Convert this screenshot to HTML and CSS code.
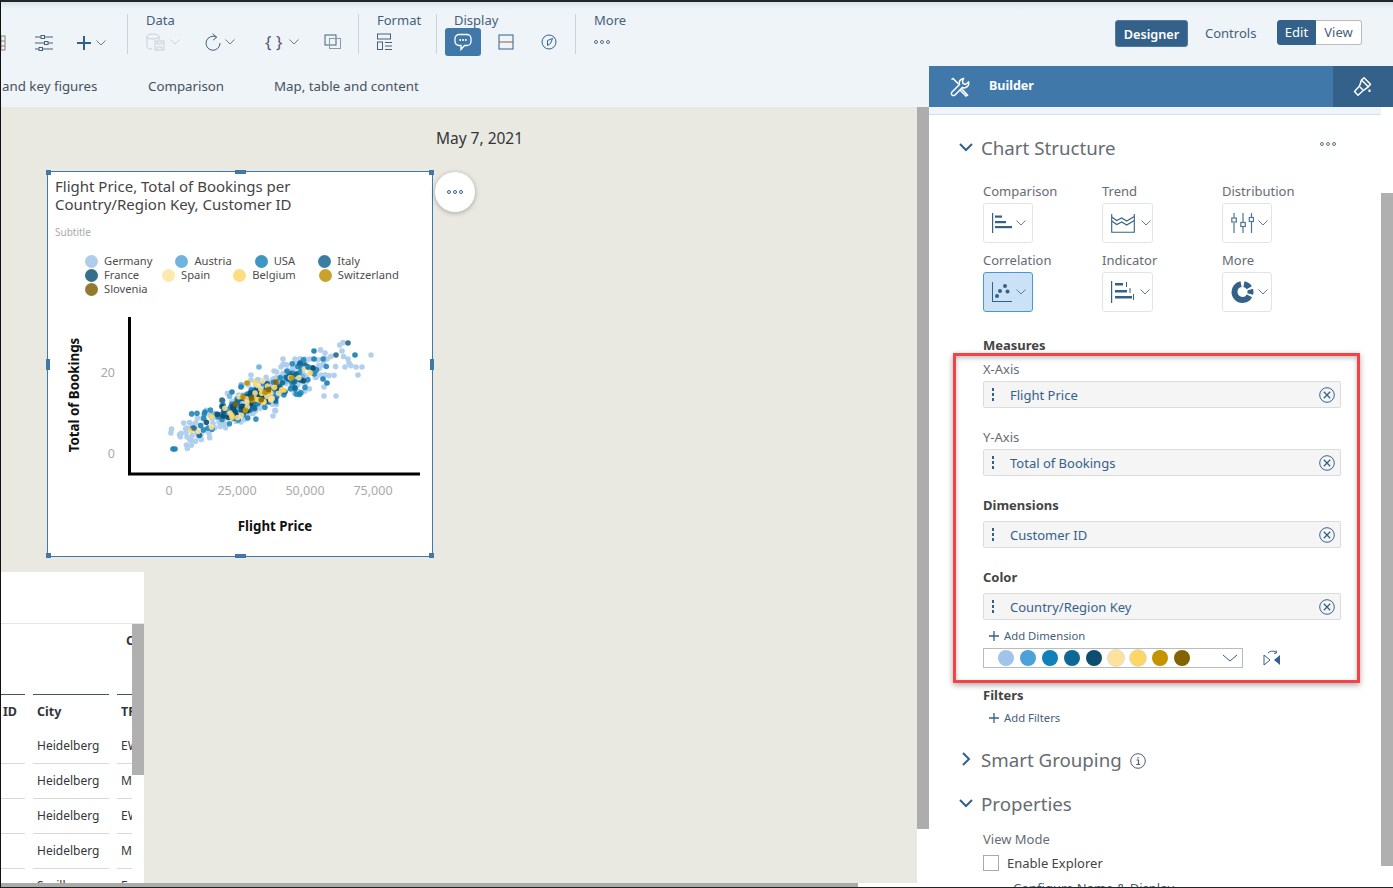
FILE: index.html
```html
<!DOCTYPE html>
<html lang="en">

<head>
    <meta charset="UTF-8" />
    <title>Chart Builder</title>
    <link rel="stylesheet" href="styles.css">
</head>

<body>
    <div class="app">
        <header class="toolbar">
            <div class="tb_group tb_first">
                <div class="tb_icons">
                    <span class="tb_icon cut_icon">
                        <svg width="18" height="18" viewBox="0 0 18 18" fill="none" stroke="#8a7f75"><rect x="2" y="2" width="14" height="14"/><path d="M2 7h14M2 12h14M7 2v14M12 2v14"/></svg>
                    </span>
                    <span class="tb_icon sliders_icon">
                        <svg width="20" height="20" viewBox="0 0 20 20" fill="none" stroke="#46607a"><path d="M1 4h6M11 4h8M1 10h9M14 10h5M1 16h4M9 16h10"/><rect x="7" y="2.500" width="3.500" height="3"/><rect x="10.500" y="8.500" width="3.500" height="3"/><rect x="5" y="14.500" width="3.500" height="3"/></svg>
                    </span>
                    <span class="tb_icon plus_icon">
                        <svg width="16" height="16" viewBox="0 0 16 16" fill="none" stroke="#34618a" stroke-width="2"><path d="M8 1v14M1 8h14"/></svg>
                        <svg class="chev" width="10" height="6" viewBox="0 0 10 6" fill="none" stroke="#5f7d9a"><path d="M.5.5 5 5 9.500.5"/></svg>
                    </span>
                </div>
            </div>

            <div class="tb_group tb_data">
                <div class="tb_label">Data</div>
                <div class="tb_icons">
                    <span class="tb_icon">
                        <svg width="20" height="18" viewBox="0 0 20 18" fill="none" stroke="#c9d0d6"><ellipse cx="7" cy="3.500" rx="6" ry="2.500"/><path d="M1 3.500v10c0 1.500 2 2.500 5 2.500M13 3.500V7"/><rect x="9" y="8" width="9" height="9"/><path d="M11 8v3h5V8M11 17v-3h5v3"/></svg>
                        <svg class="chev" width="10" height="6" viewBox="0 0 10 6" fill="none" stroke="#c9d0d6"><path d="M.5.5 5 5 9.500.5"/></svg>
                    </span>
                    <span class="tb_icon">
                        <svg width="16" height="18" viewBox="0 0 16 18" fill="none" stroke="#46607a"><path d="M11.500 4.200A7 7 0 1 0 15 10"/><path d="M7.500 .8l4.200 3.400-3.600 3"/></svg>
                        <svg class="chev" width="10" height="6" viewBox="0 0 10 6" fill="none" stroke="#5f7d9a"><path d="M.5.5 5 5 9.500.5"/></svg>
                    </span>
                    <span class="tb_icon">
                        <span class="braces">{ }</span>
                        <svg class="chev" width="10" height="6" viewBox="0 0 10 6" fill="none" stroke="#5f7d9a"><path d="M.5.5 5 5 9.500.5"/></svg>
                    </span>
                    <span class="tb_icon">
                        <svg width="18" height="16" viewBox="0 0 18 16" fill="none"><rect x="1" y="1" width="11" height="10" stroke="#46607a"/><rect x="5.500" y="4.500" width="11" height="10" stroke="#8f9aa5"/></svg>
                    </span>
                </div>
            </div>

            <div class="tb_group tb_format">
                <div class="tb_label">Format</div>
                <div class="tb_icons">
                    <span class="tb_icon">
                        <svg width="16" height="18" viewBox="0 0 16 18" fill="none" stroke="#46607a"><rect x=".5" y="1" width="13" height="5"/><rect x=".5" y="9" width="5" height="7.500"/><path d="M8 9.500h7M8 13h7M8 16.500h7"/></svg>
                    </span>
                </div>
            </div>

            <div class="tb_group tb_display">
                <div class="tb_label">Display</div>
                <div class="tb_icons">
                    <span class="tb_active">
                        <svg width="18" height="18" viewBox="0 0 18 18" fill="none" stroke="#fff" stroke-width="1.300"><path d="M5 1.500h8a4 4 0 0 1 4 4v3a4 4 0 0 1-4 4h-2.500L7 16.500v-4H5a4 4 0 0 1-4-4v-3a4 4 0 0 1 4-4z"/><path d="M5.500 7h1.500M8.300 7h1.500M11 7h1.500" stroke-width="1.800"/></svg>
                    </span>
                    <span class="tb_icon split_icon">
                        <svg width="16" height="16" viewBox="0 0 16 16" fill="none" stroke="#34618a"><rect x="1" y="1" width="14" height="14"/><path d="M1 8h14" stroke="#8a5a50"/></svg>
                    </span>
                    <span class="tb_icon compass_icon">
                        <svg width="16" height="16" viewBox="0 0 16 16" fill="none" stroke="#34618a"><circle cx="8" cy="8" r="7"/><path d="M11.500 4.500 9.500 9.500 6.500 11.500 6.500 6.500z"/></svg>
                    </span>
                </div>
            </div>

            <div class="tb_group tb_more">
                <div class="tb_label">More</div>
                <div class="tb_icons">
                    <span class="dots_h"><i></i><i></i><i></i></span>
                </div>
            </div>

            <div class="tb_right">
                <button class="designer_btn">Designer</button>
                <span class="controls_link">Controls</span>
                <div class="segmented">
                    <span class="seg_on">Edit</span>
                    <span class="seg_off">View</span>
                </div>
            </div>
        </header>

        <div class="workspace">
            <div class="left_col">
                <nav class="subbar">
                    <span class="sub_first">and key figures</span>
                    <span class="sub_second">Comparison</span>
                    <span class="sub_third">Map, table and content</span>
                </nav>

                <div class="canvas_wrap">
                    <main class="canvas">
                        <div class="canvas_date">May 7, 2021</div>

                        <section class="chart_card">
                            <i class="handle h_tl"></i><i class="handle h_tc"></i><i class="handle h_tr"></i>
                            <i class="handle h_ml"></i><i class="handle h_mr"></i>
                            <i class="handle h_bl"></i><i class="handle h_bc"></i><i class="handle h_br"></i>

                            <h2 class="chart_title">Flight Price, Total of Bookings per<br>Country/Region Key, Customer ID</h2>
                            <div class="chart_sub">Subtitle</div>

                            <div class="legend">
                                <div class="legend_row">
                                    <span class="lg_item"><i class="germany"></i>Germany</span>
                                    <span class="lg_item"><i class="austria"></i>Austria</span>
                                    <span class="lg_item"><i class="usa"></i>USA</span>
                                    <span class="lg_item"><i class="italy"></i>Italy</span>
                                </div>
                                <div class="legend_row">
                                    <span class="lg_item"><i class="france"></i>France</span>
                                    <span class="lg_item"><i class="spain"></i>Spain</span>
                                    <span class="lg_item"><i class="belgium"></i>Belgium</span>
                                    <span class="lg_item"><i class="switzerland"></i>Switzerland</span>
                                </div>
                                <div class="legend_row">
                                    <span class="lg_item"><i class="slovenia"></i>Slovenia</span>
                                </div>
                            </div>

                            <svg id="plot" class="plot" width="384" height="243" viewBox="47 314 384 243">
                                <g id="dots"></g>
                                <path d="M128.500 317V474H419" fill="none" stroke="#000" stroke-width="3"/>
                                <text class="tick" x="114" y="377" text-anchor="end">20</text>
                                <text class="tick" x="114" y="458" text-anchor="end">0</text>
                                <text class="tick" x="168" y="495" text-anchor="middle">0</text>
                                <text class="tick" x="236" y="495" text-anchor="middle">25,000</text>
                                <text class="tick" x="304" y="495" text-anchor="middle">50,000</text>
                                <text class="tick" x="372" y="495" text-anchor="middle">75,000</text>
                                <text class="axis_name" x="274" y="531" text-anchor="middle">Flight Price</text>
                                <text class="axis_name" transform="translate(78 395) rotate(-90)" text-anchor="middle">Total of Bookings</text>
                            </svg>
                        </section>

                        <button class="card_more"><span class="dots_h"><i></i><i></i><i></i></span></button>

                        <section class="table_card">
                            <div class="table_top"></div>
                            <div class="table_group"><span></span><span></span><span class="grp_c">C</span></div>
                            <div class="table_grid">
                                <div class="th">ID</div><div class="th">City</div><div class="th">TRIP</div>
                                <div class="td"></div><div class="td">Heidelberg</div><div class="td">EWR</div>
                                <div class="td"></div><div class="td">Heidelberg</div><div class="td">MUC</div>
                                <div class="td"></div><div class="td">Heidelberg</div><div class="td">EWR</div>
                                <div class="td"></div><div class="td">Heidelberg</div><div class="td">MUC</div>
                                <div class="td"></div><div class="td">Sevilla</div><div class="td">Fra</div>
                            </div>
                            <div class="table_scroll"></div>
                        </section>
                    </main>
                    <div class="canvas_vbar"></div>
                </div>
                <div class="canvas_hbar"></div>
            </div>

            <aside class="panel">
                <div class="panel_head">
                    <svg width="20" height="20" viewBox="0 0 20 20" fill="none" stroke="#fff" stroke-width="1.500"><path d="M13.500 1.500a4.500 4.500 0 0 0-4 6L2 15a2 2 0 0 0 3 3l7.500-7.500a4.500 4.500 0 0 0 6-5.500l-3 2.500-2.500-1 -.5-2.500z"/><path d="M1.500 2.500 3 1.500 8.500 7M11.500 11.500l6 6.500-1.500 1-6-6"/></svg>
                    <span class="panel_title">Builder</span>
                    <span class="panel_tab">
                        <svg width="20" height="20" viewBox="0 0 20 20" fill="none" stroke="#fff" stroke-width="1.500" stroke-linejoin="round"><path d="M8.500 3 11 .8l6.500 6.500-2.200 2.500z"/><path d="M8.500 3 6.500 9l-5 5.500 3.500 3.800 5.500-5 4.800-3.500"/><path d="M7 10l3 3"/><path d="M16.500 12.500v2.500" stroke-width="2"/></svg>
                    </span>
                </div>
                <div class="panel_band"></div>

                <div class="panel_body">
                    <div class="sec_head first_head">
                        <svg class="sec_chev" width="14" height="9" viewBox="0 0 14 9" fill="none" stroke="#34618a" stroke-width="2"><path d="M1 1l6 6 6-6"/></svg>
                        <span class="sec_title">Chart Structure</span>
                        <span class="dots_h sec_dots"><i></i><i></i><i></i></span>
                    </div>

                    <div class="type_grid">
                        <div class="type_cell">
                            <div class="type_label">Comparison</div>
                            <div class="type_btn">
                                <svg width="20" height="20" viewBox="0 0 20 20" fill="#34618a"><rect x="0" y="0" width="1.200" height="20"/><rect x="3" y="2.500" width="7" height="2.200"/><rect x="3" y="8" width="11" height="2.200"/><rect x="3" y="13" width="17" height="2.200"/></svg>
                                <svg class="chev" width="10" height="6" viewBox="0 0 10 6" fill="none" stroke="#5f7d9a"><path d="M.5.5 5 5 9.500.5"/></svg>
                            </div>
                        </div>
                        <div class="type_cell">
                            <div class="type_label">Trend</div>
                            <div class="type_btn wide_btn">
                                <svg width="24" height="19" viewBox="0 0 24 19" fill="none" stroke="#34618a" stroke-width="1.100"><path d="M.7 0v18.300h22.600V0"/><path d="M.7 7l5 3.500 5-2.500 5 3 7.600-4.500"/><path d="M.7 3l5 3.500 5-2.500 5 3 7.600-4.500"/></svg>
                                <svg class="chev chev_far" width="10" height="6" viewBox="0 0 10 6" fill="none" stroke="#5f7d9a"><path d="M.5.5 5 5 9.500.5"/></svg>
                            </div>
                        </div>
                        <div class="type_cell">
                            <div class="type_label">Distribution</div>
                            <div class="type_btn">
                                <svg width="23" height="20" viewBox="0 0 23 20" fill="none" stroke="#4c769b" stroke-width="1.200"><path d="M3 0v5M3 10v10M12 0v9M12 14v6M20.500 0v4M20.500 9v11"/><rect x=".8" y="5" width="4.500" height="4"/><rect x="9.800" y="9.500" width="4.500" height="4"/><rect x="18.300" y="4.500" width="4.200" height="4"/></svg>
                                <svg class="chev" width="10" height="6" viewBox="0 0 10 6" fill="none" stroke="#5f7d9a"><path d="M.5.5 5 5 9.500.5"/></svg>
                            </div>
                        </div>
                        <div class="type_cell">
                            <div class="type_label">Correlation</div>
                            <div class="type_btn type_on">
                                <svg width="20" height="20" viewBox="0 0 20 20" fill="#34618a"><rect x="0" y="0" width="1" height="20"/><rect x="0" y="19" width="20" height="1"/><circle cx="5" cy="14" r="2"/><circle cx="8" cy="9" r="2"/><circle cx="13" cy="4" r="2"/><circle cx="15.500" cy="9.500" r="2"/></svg>
                                <svg class="chev" width="10" height="6" viewBox="0 0 10 6" fill="none" stroke="#5f7d9a"><path d="M.5.5 5 5 9.500.5"/></svg>
                            </div>
                        </div>
                        <div class="type_cell">
                            <div class="type_label">Indicator</div>
                            <div class="type_btn wide_btn">
                                <svg width="23" height="22" viewBox="0 0 23 22" fill="#34618a"><rect x="0" y="0" width="1.200" height="22"/><rect x="4" y="2" width="8" height="2.500"/><rect x="4" y="9" width="12" height="2.500"/><rect x="4" y="15" width="17" height="2.500"/><rect x="15" y="1" width="1" height="5"/><rect x="18.500" y="7" width="1" height="5"/><rect x="22" y="13" width="1" height="6"/></svg>
                                <svg class="chev chev_far" width="10" height="6" viewBox="0 0 10 6" fill="none" stroke="#5f7d9a"><path d="M.5.5 5 5 9.500.5"/></svg>
                            </div>
                        </div>
                        <div class="type_cell">
                            <div class="type_label">More</div>
                            <div class="type_btn">
                                <svg width="23" height="22" viewBox="0 0 23 22" fill="none"><circle cx="11.500" cy="11" r="8" stroke="#34618a" stroke-width="6" pathLength="100" stroke-dasharray="0 3 13 4 9 4 64 3" transform="rotate(-90 11.500 11)"/></svg>
                                <svg class="chev" width="10" height="6" viewBox="0 0 10 6" fill="none" stroke="#5f7d9a"><path d="M.5.5 5 5 9.500.5"/></svg>
                            </div>
                        </div>
                    </div>

                    <div class="bold_label measures_label">Measures</div>
                    <div class="axis_label x_label">X-Axis</div>
                    <div class="field"><span class="grip"><i></i><i></i><i></i></span><span class="field_text">Flight Price</span><svg class="field_x" width="16" height="16" viewBox="0 0 16 16" fill="none" stroke="#34618a"><circle cx="8" cy="8" r="7.300"/><path d="M4.800 4.800l6.400 6.400M11.200 4.800l-6.400 6.400" stroke-width="1.300"/></svg></div>

                    <div class="axis_label y_label">Y-Axis</div>
                    <div class="field"><span class="grip"><i></i><i></i><i></i></span><span class="field_text">Total of Bookings</span><svg class="field_x" width="16" height="16" viewBox="0 0 16 16" fill="none" stroke="#34618a"><circle cx="8" cy="8" r="7.300"/><path d="M4.800 4.800l6.400 6.400M11.200 4.800l-6.400 6.400" stroke-width="1.300"/></svg></div>

                    <div class="bold_label gap_label">Dimensions</div>
                    <div class="field"><span class="grip"><i></i><i></i><i></i></span><span class="field_text">Customer ID</span><svg class="field_x" width="16" height="16" viewBox="0 0 16 16" fill="none" stroke="#34618a"><circle cx="8" cy="8" r="7.300"/><path d="M4.800 4.800l6.400 6.400M11.200 4.800l-6.400 6.400" stroke-width="1.300"/></svg></div>

                    <div class="bold_label gap_label">Color</div>
                    <div class="field"><span class="grip"><i></i><i></i><i></i></span><span class="field_text">Country/Region Key</span><svg class="field_x" width="16" height="16" viewBox="0 0 16 16" fill="none" stroke="#34618a"><circle cx="8" cy="8" r="7.300"/><path d="M4.800 4.800l6.400 6.400M11.200 4.800l-6.400 6.400" stroke-width="1.300"/></svg></div>

                    <div class="add_link add_dim"><svg width="12" height="12" viewBox="0 0 12 12" stroke="#34618a" stroke-width="1.300"><path d="M6 1v10M1 6h10"/></svg>Add Dimension</div>

                    <div class="palette_row">
                        <div class="palette">
                            <i class="pal1"></i><i class="pal2"></i><i class="pal3"></i><i class="pal4"></i><i class="pal5"></i><i class="pal6"></i><i class="pal7"></i><i class="pal8"></i><i class="pal9"></i>
                            <svg class="pal_chev" width="18" height="8" viewBox="0 0 18 8" fill="none" stroke="#34618a"><path d="M2 1l7 6 7-6"/></svg>
                        </div>
                        <svg class="flip_icon" width="18" height="16" viewBox="0 0 18 16"><path d="M1 5v10l6-5z" fill="none" stroke="#34618a"/><path d="M17 5v10l-6-5z" fill="#34618a"/><path d="M5 3c2-2 5-2.500 8-1M13 .5 13.500 3 11 3.500" fill="none" stroke="#34618a"/></svg>
                    </div>

                    <div class="bold_label filters_label">Filters</div>
                    <div class="add_link add_filter"><svg width="12" height="12" viewBox="0 0 12 12" stroke="#34618a" stroke-width="1.300"><path d="M6 1v10M1 6h10"/></svg>Add Filters</div>

                    <div class="sec_head smart_head">
                        <svg class="sec_chev" width="14" height="14" viewBox="0 0 14 14" fill="none" stroke="#34618a" stroke-width="2"><path d="M4 1l6 6-6 6"/></svg>
                        <span class="sec_title">Smart Grouping</span>
                        <svg class="info_icon" width="16" height="16" viewBox="0 0 16 16" fill="none" stroke="#555f69"><circle cx="8" cy="8" r="7.300"/><path d="M6.500 7h2v4.500M6.300 11.500h4M8 4v1.500" stroke-width="1.200"/></svg>
                    </div>

                    <div class="sec_head props_head">
                        <svg class="sec_chev" width="14" height="9" viewBox="0 0 14 9" fill="none" stroke="#34618a" stroke-width="2"><path d="M1 1l6 6 6-6"/></svg>
                        <span class="sec_title">Properties</span>
                    </div>

                    <div class="axis_label view_label">View Mode</div>
                    <label class="check_row"><span class="check_box"></span>Enable Explorer</label>
                    <div class="cut_link">Configure Name &amp; Display</div>
                </div>

                <div class="panel_scroll"></div>
                <div class="red_box"></div>
            </aside>
        </div>
    </div>

    <script src="chart.js"></script>
</body>

</html>
```

FILE: styles.css
```css
* {
    box-sizing: border-box;
}

html,
body {
    margin: 0;
    height: 100%;
}

body {
    font-family: "Noto Sans", "Open Sans", sans-serif;
    font-size: 13px;
    color: #32363a;
    background-color: #fff;
    overflow: hidden;
}

.app {
    width: 1393px;
    height: 888px;
    display: flex;
    flex-direction: column;
    border-left: 1px solid #111;
    border-top: 2px solid #1d2730;
    border-bottom: 1px solid #222;
    overflow: hidden;
}

/* toolbar */
.toolbar {
    height: 64px;
    flex: none;
    display: flex;
    background: linear-gradient(#dfe4e9, #eff4f9 7px);
    color: #46607a;
}

.tb_group {
    height: 40px;
    margin-top: 12px;
    border-right: 1px solid #c9d3dc;
    position: relative;
    flex: none;
}

.tb_first {
    width: 127px;
}

.tb_data {
    width: 231px;
    padding-left: 18px;
}

.tb_format {
    width: 78px;
    padding-left: 18px;
}

.tb_display {
    width: 139px;
    padding-left: 17px;
}

.tb_more {
    width: 120px;
    border-right: 0;
    padding-left: 18px;
}

.tb_label {
    font-size: 13px;
    line-height: 14px;
    margin-top: -1px;
    color: #46607a;
}

.tb_icons {
    display: flex;
    align-items: center;
    height: 29px;
    margin-top: 0;
}

.tb_first .tb_icons {
    margin-top: 14px;
}

.tb_icon {
    display: inline-flex;
    align-items: center;
    flex: none;
}

.chev {
    flex: none;
    margin-left: 4px;
}

.cut_icon {
    margin-left: -12px;
    width: 45px;
}

.sliders_icon {
    width: 42px;
}

.tb_data .tb_icon {
    width: 59px;
}

.tb_data .tb_icon:nth-child(2) {
    width: 60px;
    padding-left: 0;
}

.tb_data .tb_icon:last-child {
    width: 20px;
}

.braces {
    width: 20px;
    font-size: 17px;
    color: #5a5478;
    white-space: nowrap;
}

.tb_active {
    width: 36px;
    height: 28px;
    border-radius: 3px;
    background-color: #4079a9;
    display: flex;
    align-items: center;
    justify-content: center;
    margin-left: -9px;
    flex: none;
}

.split_icon {
    margin-left: 17px;
}

.compass_icon {
    margin-left: 27px;
}

.dots_h {
    display: inline-flex;
    gap: 2px;
    align-items: center;
}

.dots_h i {
    width: 4px;
    height: 4px;
    border: 1px solid #5b6f84;
    border-radius: 50%;
}

.tb_right {
    flex: 1;
    display: flex;
    align-items: flex-start;
    padding-top: 18px;
    padding-left: 419px;
    min-width: 0;
}

.designer_btn {
    width: 73px;
    height: 27px;
    flex: none;
    border: 1px solid #4f7ba3;
    border-radius: 3px;
    background-color: #34618a;
    color: #fff;
    font: 600 12.700px "Noto Sans", sans-serif;
    padding: 0;
}

.controls_link {
    margin-left: 17px;
    line-height: 27px;
    color: #46607a;
    width: 72px;
    flex: none;
}

.segmented {
    display: flex;
    width: 85px;
    height: 25px;
    flex: none;
    line-height: 23px;
    text-align: center;
}

.seg_on {
    width: 39px;
    background-color: #34618a;
    color: #fff;
    border: 1px solid #34618a;
    border-radius: 3px 0 0 3px;
}

.seg_off {
    width: 46px;
    background-color: #fff;
    color: #46607a;
    border: 1px solid #bbb;
    border-left: 0;
    border-radius: 0 3px 3px 0;
}

/* main area */
.workspace {
    flex: 1;
    display: flex;
    min-height: 0;
}

.left_col {
    width: 928px;
    flex: none;
    display: flex;
    flex-direction: column;
}

.subbar {
    height: 41px;
    flex: none;
    background-color: #eff4f9;
    display: flex;
    align-items: center;
    color: #46525e;
    font-size: 13.300px;
    padding-bottom: 1px;
}

.sub_first {
    width: 147px;
    padding-left: 1px;
}

.sub_second {
    width: 126px;
}

.canvas_wrap {
    flex: 1;
    display: flex;
    min-height: 0;
}

.canvas {
    flex: 1;
    position: relative;
    background-color: #e9e9e1;
    overflow: hidden;
}

.canvas_vbar {
    width: 12px;
    flex: none;
    background: linear-gradient(#adadad 722px, #fff 722px);
}

.canvas_hbar {
    height: 4px;
    flex: none;
    background-color: #aaa;
    width: 857px;
}

.canvas_date {
    text-align: center;
    padding-top: 21px;
    padding-left: 41px;
    font-size: 15.500px;
    line-height: 20px;
    color: #32363a;
}

/* chart widget, free placed on the canvas */
.chart_card {
    position: absolute;
    left: 46px;
    top: 64px;
    width: 386px;
    height: 386px;
    background-color: #fff;
    border: 1px solid #4079a9;
}

.handle {
    position: absolute;
    background-color: #4079a9;
    width: 5px;
    height: 5px;
}

.h_tl { left: -2px; top: -2px; }
.h_tc { left: 187px; top: -2px; width: 11px; height: 4px; }
.h_tr { right: -2px; top: -2px; }
.h_ml { left: -2px; top: 187px; width: 4px; height: 11px; }
.h_mr { right: -2px; top: 187px; width: 4px; height: 11px; }
.h_bl { left: -2px; bottom: -2px; }
.h_bc { left: 187px; bottom: -2px; width: 11px; height: 4px; }
.h_br { right: -2px; bottom: -2px; }

.chart_title {
    margin: 0;
    padding: 5px 0 0 7px;
    font-size: 15px;
    line-height: 18px;
    font-weight: 400;
    color: #444;
}

.chart_sub {
    padding: 11px 0 0 7px;
    font-size: 10px;
    line-height: 16px;
    color: #a9a9a9;
}

.legend {
    padding: 14px 0 0 37px;
}

.legend_row {
    display: flex;
    gap: 23px;
    height: 14px;
}

.lg_item {
    display: flex;
    align-items: center;
    gap: 6px;
    font-size: 11.200px;
    line-height: 14px;
    color: #4d4d4d;
}

.lg_item i {
    width: 13px;
    height: 13px;
    border-radius: 50%;
}

.germany { background-color: #aecdec; }
.austria { background-color: #6fb3df; }
.usa { background-color: #3d97c3; }
.italy { background-color: #3a7fa3; }
.france { background-color: #366f8c; }
.spain { background-color: #fde9ae; }
.belgium { background-color: #fedd80; }
.switzerland { background-color: #c9a22e; }
.slovenia { background-color: #947a2e; }

.plot {
    display: block;
    position: absolute;
    left: 0;
    top: 142px;
}

.tick {
    font-size: 12.500px;
    fill: #a9a9a9;
}

.axis_name {
    font-size: 13.300px;
    font-weight: 700;
    fill: #111;
}

.card_more {
    position: absolute;
    left: 434px;
    top: 65px;
    width: 40px;
    height: 40px;
    border: 0;
    padding: 0;
    border-radius: 50%;
    background-color: #fff;
    box-shadow: 0 1px 5px rgba(0, 0, 0, 0.3);
    display: flex;
    align-items: center;
    justify-content: center;
}

.card_more .dots_h i {
    border-color: #34618a;
}

/* table widget */
.table_card {
    position: absolute;
    left: 0;
    top: 465px;
    width: 143px;
    height: 320px;
    background-color: #fff;
}

.table_top {
    height: 52px;
    border-bottom: 1px solid #e5e5e5;
}

.table_group {
    height: 71px;
    display: grid;
    grid-template-columns: 24px 76px 15px;
    column-gap: 8px;
}

.table_group span {
    border-bottom: 1px solid #49545f;
    font-weight: 700;
    font-size: 12.500px;
    line-height: 34px;
}

.table_group .grp_c {
    padding-left: 9px;
    overflow: hidden;
    white-space: nowrap;
    width: 15px;
}

.table_grid {
    display: grid;
    grid-template-columns: 24px 76px 15px;
    column-gap: 8px;
    grid-template-rows: 34px;
    grid-auto-rows: 35px;
}

.th,
.td {
    padding-left: 4px;
    overflow: hidden;
    white-space: nowrap;
    font-size: 12px;
    line-height: 34px;
    border-bottom: 1px solid #d9d9d9;
}

.th {
    font-weight: 700;
    font-size: 12.500px;
    border-bottom: 0;
}

.th:first-child {
    padding-left: 2px;
}

.table_scroll {
    position: absolute;
    left: 131px;
    top: 52px;
    width: 12px;
    height: 151px;
    background-color: #b0b0b0;
}

/* builder panel */
.panel {
    flex: 1;
    position: relative;
    overflow: hidden;
    background-color: #fff;
    display: flex;
    flex-direction: column;
}

.panel_head {
    height: 41px;
    flex: none;
    background-color: #4079a9;
    display: flex;
    align-items: center;
    padding-left: 21px;
    color: #fff;
}

.panel_title {
    margin-left: 19px;
    padding-bottom: 2px;
    font-weight: 700;
    font-size: 12.500px;
}

.panel_tab {
    margin-left: auto;
    width: 60px;
    height: 41px;
    background-color: #34618a;
    display: flex;
    align-items: center;
    justify-content: center;
}

.panel_band {
    height: 8px;
    width: 452px;
    flex: none;
    background-color: #eff4f9;
    border-bottom: 1px solid #d0e0f0;
}

.panel_body {
    flex: 1;
    padding-left: 54px;
    padding-right: 52px;
}

.sec_head {
    display: flex;
    align-items: center;
    height: 28px;
    margin-left: -24px;
    position: relative;
}

.first_head {
    margin-top: 18px;
}

.smart_head {
    margin-top: 19px;
}

.props_head {
    margin-top: 16px;
}

.sec_chev {
    width: 14px;
    flex: none;
}

.sec_title {
    margin-left: 8px;
    font-size: 18.700px;
    color: #666c72;
}

.sec_dots {
    position: absolute;
    right: 5px;
    top: 9px;
}

.info_icon {
    margin-left: 8px;
    margin-top: 3px;
}

.type_grid {
    margin-top: 22px;
    display: grid;
    grid-template-columns: 119px 120px 119px;
    row-gap: 9px;
}

.type_label {
    line-height: 16px;
    color: #666c72;
    margin-bottom: 4px;
}

.type_btn {
    width: 50px;
    height: 40px;
    border: 1px solid #e1e4e7;
    border-radius: 3px;
    background-color: #fff;
    display: flex;
    align-items: center;
    padding-left: 8px;
}

.wide_btn {
    width: 51px;
}

.chev_far {
    margin-left: 6px;
}

.type_on {
    background-color: #cbe1f5;
    border-color: #4a96d8;
}

.bold_label {
    font-weight: 700;
    line-height: 16px;
    color: #444;
}

.measures_label {
    margin-top: 25px;
}

.gap_label {
    margin-top: 21px;
    margin-bottom: 8px;
}

.axis_label {
    line-height: 16px;
    color: #666c72;
}

.x_label {
    margin-top: 8px;
    margin-bottom: 4px;
}

.y_label {
    margin-top: 21px;
    margin-bottom: 4px;
}

.field {
    height: 27px;
    display: flex;
    align-items: center;
    background-color: #f5f5f5;
    border: 1px solid #dcdcdc;
    border-radius: 2px;
    color: #34618a;
}

.grip {
    display: inline-flex;
    flex-direction: column;
    gap: 2px;
    margin-left: 8px;
    width: 18px;
}

.grip i {
    width: 2px;
    height: 3px;
    background-color: #34618a;
}

.field_text {
    flex: 1;
}

.field_x {
    margin-right: 5px;
}

.add_link {
    display: flex;
    align-items: center;
    gap: 4px;
    font-size: 11.300px;
    line-height: 16px;
    color: #46607a;
    padding-left: 5px;
}

.add_dim {
    margin-top: 8px;
}

.palette_row {
    display: flex;
    align-items: center;
    margin-top: 4px;
}

.palette {
    width: 260px;
    height: 20px;
    border: 1px solid #bbb;
    display: flex;
    align-items: center;
    gap: 6px;
    padding-left: 14px;
    background-color: #fff;
}

.palette i {
    width: 16px;
    height: 16px;
    border-radius: 50%;
    flex: none;
}

.pal1 { background-color: #a0c4ea; }
.pal2 { background-color: #4ba2d8; }
.pal3 { background-color: #0f80b8; }
.pal4 { background-color: #0d6896; }
.pal5 { background-color: #0c4d70; }
.pal6 { background-color: #fde39a; box-shadow: 0 0 0 1px #ddd; }
.pal7 { background-color: #fdd663; box-shadow: 0 0 0 1px #ddd; }
.pal8 { background-color: #c39400; }
.pal9 { background-color: #826300; }

.pal_chev {
    margin-left: 25px;
}

.flip_icon {
    margin-left: 20px;
}

.filters_label {
    margin-top: 19px;
}

.add_filter {
    margin-top: 7px;
}

.view_label {
    margin-top: 14px;
}

.check_row {
    display: flex;
    align-items: center;
    gap: 8px;
    height: 16px;
    margin-top: 8px;
    color: #444;
}

.check_box {
    width: 16px;
    height: 16px;
    border: 1px solid #aaa;
    background-color: #fff;
}

.cut_link {
    margin-top: 9px;
    padding-left: 30px;
    line-height: 16px;
    color: #46607a;
    white-space: nowrap;
}

.panel_scroll {
    position: absolute;
    right: 0;
    top: 127px;
    width: 12px;
    height: 673px;
    background-color: #b0b0b0;
}

.red_box {
    position: absolute;
    left: 24px;
    top: 287px;
    width: 407px;
    height: 330px;
    border: 3px solid #f44346;
    box-shadow: 0 2px 6px rgba(0, 0, 0, 0.35), inset 0 2px 5px rgba(0, 0, 0, 0.25);
    pointer-events: none;
}
```

FILE: chart.js
```js
// scatter dots for the flight price chart
const dotsGroup = document.querySelector('#dots');
const ns = 'http://www.w3.org/2000/svg';

let seed = 4711;
function rnd() {
    seed = (seed * 16807) % 2147483647;
    return seed / 2147483647;
}

function bell() {
    return (rnd() + rnd() + rnd()) / 1.5 - 1;
}

function addDot(x, y, color, opacity) {
    const c = document.createElementNS(ns, 'circle');
    c.setAttribute('cx', x.toFixed(1));
    c.setAttribute('cy', y.toFixed(1));
    c.setAttribute('r', 2.8);
    c.setAttribute('fill', color);
    c.setAttribute('opacity', opacity);
    dotsGroup.appendChild(c);
}

function cluster(count, color, spreadX, spreadY, opacity) {
    for (let i = 0; i < count; i++) {
        const t = bell();
        const x = 256 + t * spreadX;
        const y = 398 - t * spreadX * 0.49 + bell() * spreadY;
        addDot(x, y, color, opacity);
    }
}

// outliers read off the picture
const lightFixed = [[186, 428], [186, 437], [189, 440], [282, 359], [294, 359], [294, 363], [304, 359], [309, 359],
    [324, 359], [326, 359], [347, 359], [348, 363], [344, 367], [355, 367], [361, 367], [357, 375], [341, 351],
    [370, 355], [335, 396], [323, 387], [323, 396], [280, 367], [273, 371], [250, 375], [250, 380], [272, 416],
    [318, 367], [320, 375], [312, 372]];
lightFixed.forEach(p => addDot(p[0], p[1], '#aecdec', 0.95));

cluster(260, '#aecdec', 110, 28, 0.95);
cluster(14, '#6fb3df', 90, 24, 0.9);
cluster(90, '#1f84b5', 90, 24, 0.88);
cluster(50, '#0d6896', 80, 20, 0.9);
cluster(34, '#0c4d70', 62, 16, 0.9);
cluster(26, '#fde39a', 85, 22, 0.85);
cluster(14, '#fdd663', 80, 20, 0.9);
cluster(6, '#c39400', 60, 16, 0.9);
cluster(5, '#826300', 45, 12, 0.9);

const darkFixed = [[172, 449, '#1f84b5'], [174, 449, '#1f84b5'], [347, 343, '#366f8c'], [335, 355, '#366f8c'],
    [354, 355, '#1f84b5'], [313, 351, '#1f84b5'], [313, 359, '#1f84b5'], [299, 363, '#0d6896'], [258, 367, '#6fb3df'],
    [246, 383, '#c39400'], [221, 400, '#366f8c'], [204, 412, '#1f84b5'], [193, 428, '#366f8c'], [231, 392, '#1f84b5'],
    [240, 387, '#1f84b5'], [286, 371, '#1f84b5'], [307, 367, '#1f84b5'], [322, 379, '#1f84b5'], [326, 383, '#1f84b5']];
darkFixed.forEach(p => addDot(p[0], p[1], p[2], 0.95));
```
